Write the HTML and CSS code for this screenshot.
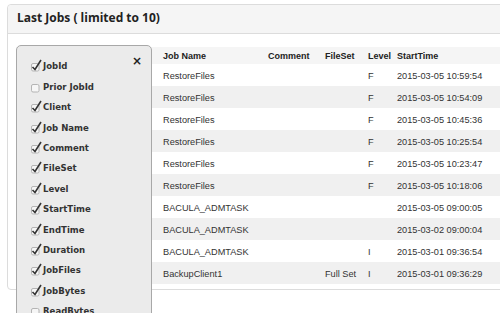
FILE: index.html
```html
<!DOCTYPE html>
<html lang="en">
<head>
<meta charset="UTF-8">
<title>Last Jobs</title>
<link rel="stylesheet" href="styles.css">
</head>
<body>

<div class="panel">
  <div class="panel-heading">Last Jobs ( limited to 10)</div>
  <div class="panel-body">

    <table class="jobs">
      <tr>
        <th class="c-id">JobId</th>
        <th class="c-client">Client</th>
        <th class="c-name">Job Name</th>
        <th class="c-comment">Comment</th>
        <th class="c-fileset">FileSet</th>
        <th class="c-level">Level</th>
        <th class="c-start">StartTime</th>
      </tr>
      <tr><td>10</td><td>backup-fd</td><td>RestoreFiles</td><td></td><td></td><td>F</td><td>2015-03-05 10:59:54</td></tr>
      <tr><td>9</td><td>backup-fd</td><td>RestoreFiles</td><td></td><td></td><td>F</td><td>2015-03-05 10:54:09</td></tr>
      <tr><td>8</td><td>backup-fd</td><td>RestoreFiles</td><td></td><td></td><td>F</td><td>2015-03-05 10:45:36</td></tr>
      <tr><td>7</td><td>backup-fd</td><td>RestoreFiles</td><td></td><td></td><td>F</td><td>2015-03-05 10:25:54</td></tr>
      <tr><td>6</td><td>backup-fd</td><td>RestoreFiles</td><td></td><td></td><td>F</td><td>2015-03-05 10:23:47</td></tr>
      <tr><td>5</td><td>backup-fd</td><td>RestoreFiles</td><td></td><td></td><td>F</td><td>2015-03-05 10:18:06</td></tr>
      <tr><td>4</td><td>backup-fd</td><td>BACULA_ADMTASK</td><td></td><td></td><td></td><td>2015-03-05 09:00:05</td></tr>
      <tr><td>3</td><td>backup-fd</td><td>BACULA_ADMTASK</td><td></td><td></td><td></td><td>2015-03-02 09:00:04</td></tr>
      <tr><td>2</td><td>backup-fd</td><td>BACULA_ADMTASK</td><td></td><td></td><td>I</td><td>2015-03-01 09:36:54</td></tr>
      <tr><td>1</td><td>client1-fd</td><td>BackupClient1</td><td></td><td>Full Set</td><td>I</td><td>2015-03-01 09:36:29</td></tr>
    </table>

    <!-- column chooser dropdown, open -->
    <div class="col-menu">
      <span class="close">&times;</span>
      <label class="item"><svg class="cb" viewBox="0 0 13 13"><rect x="1.5" y="4.5" width="7.5" height="7.5" rx="1.5"/><path d="M2.5 8 L5 10.5 L11 1"/></svg>JobId</label>
      <label class="item"><svg class="cb" viewBox="0 0 13 13"><rect x="1.5" y="4.5" width="7.5" height="7.5" rx="1.5"/></svg>Prior JobId</label>
      <label class="item"><svg class="cb" viewBox="0 0 13 13"><rect x="1.5" y="4.5" width="7.5" height="7.5" rx="1.5"/><path d="M2.5 8 L5 10.5 L11 1"/></svg>Client</label>
      <label class="item"><svg class="cb" viewBox="0 0 13 13"><rect x="1.5" y="4.5" width="7.5" height="7.5" rx="1.5"/><path d="M2.5 8 L5 10.5 L11 1"/></svg>Job Name</label>
      <label class="item"><svg class="cb" viewBox="0 0 13 13"><rect x="1.5" y="4.5" width="7.5" height="7.5" rx="1.5"/><path d="M2.5 8 L5 10.5 L11 1"/></svg>Comment</label>
      <label class="item"><svg class="cb" viewBox="0 0 13 13"><rect x="1.5" y="4.5" width="7.5" height="7.5" rx="1.5"/><path d="M2.5 8 L5 10.5 L11 1"/></svg>FileSet</label>
      <label class="item"><svg class="cb" viewBox="0 0 13 13"><rect x="1.5" y="4.5" width="7.5" height="7.5" rx="1.5"/><path d="M2.5 8 L5 10.5 L11 1"/></svg>Level</label>
      <label class="item"><svg class="cb" viewBox="0 0 13 13"><rect x="1.5" y="4.5" width="7.5" height="7.5" rx="1.5"/><path d="M2.5 8 L5 10.5 L11 1"/></svg>StartTime</label>
      <label class="item"><svg class="cb" viewBox="0 0 13 13"><rect x="1.5" y="4.5" width="7.5" height="7.5" rx="1.5"/><path d="M2.5 8 L5 10.5 L11 1"/></svg>EndTime</label>
      <label class="item"><svg class="cb" viewBox="0 0 13 13"><rect x="1.5" y="4.5" width="7.5" height="7.5" rx="1.5"/><path d="M2.5 8 L5 10.5 L11 1"/></svg>Duration</label>
      <label class="item"><svg class="cb" viewBox="0 0 13 13"><rect x="1.5" y="4.5" width="7.5" height="7.5" rx="1.5"/><path d="M2.5 8 L5 10.5 L11 1"/></svg>JobFiles</label>
      <label class="item"><svg class="cb" viewBox="0 0 13 13"><rect x="1.5" y="4.5" width="7.5" height="7.5" rx="1.5"/><path d="M2.5 8 L5 10.5 L11 1"/></svg>JobBytes</label>
      <label class="item"><svg class="cb" viewBox="0 0 13 13"><rect x="1.5" y="4.5" width="7.5" height="7.5" rx="1.5"/></svg>ReadBytes</label>
    </div>

  </div>
</div>

</body>
</html>
```

FILE: styles.css
```css
html, body {
  margin: 0;
  overflow: hidden;
}
body {
  font-family: "Liberation Sans", Arial, sans-serif;
  background-color: #fff;
  color: #333;
  width: 500px;
  height: 313px;
}
.panel {
  margin: 4px 0 0 7px;
  width: 560px;
  border: 1px solid #dcdcdc;
  border-radius: 4px;
  background-color: #fff;
}
.panel-heading {
  height: 28px;
  line-height: 26px;
  padding-left: 9px;
  font-family: "Open Sans", "DejaVu Sans", sans-serif;
  font-weight: bold;
  font-size: 12px;
  color: #222;
  background-color: #f5f5f5;
  border-bottom: 1px solid #dcdcdc;
  border-radius: 4px 4px 0 0;
}
.panel-body {
  position: relative;
  padding: 13px 8px 5px 8px;
}
table.jobs {
  border-collapse: collapse;
  table-layout: fixed;
  width: 540px;
  font-size: 9.2px;
}
.jobs th, .jobs td {
  box-sizing: border-box;
  text-align: left;
  padding: 0 0 0 8px;
  white-space: nowrap;
  overflow: hidden;
}
.jobs th {
  height: 17px;
  overflow: visible;
  font-weight: bold;
  font-size: 9px;
  color: #222;
  background-color: #f5f5f5;
}
.jobs td {
  height: 22px;
  padding-top: 1px;
}
.jobs tr:nth-child(odd) td {
  background-color: #f0f0f0;
}
.c-id { width: 54px; }
.c-client { width: 85px; }
.c-name { width: 105px; }
.c-comment { width: 57px; }
.c-fileset { width: 43px; }
.c-level { width: 29px; }

.col-menu {
  position: absolute;
  left: 8px;
  top: 11px;
  width: 121px;
  height: 300px;
  padding: 6px 0 0 13px;
  background-color: #ebebeb;
  border: 1px solid #a8a8a8;
  border-radius: 5px;
  font-family: "DejaVu Sans Condensed", "DejaVu Sans", sans-serif;
  font-weight: bold;
  font-size: 9.5px;
  color: #333;
}
.close {
  position: absolute;
  right: 9px;
  top: 8px;
  font-size: 12px;
  font-family: "DejaVu Sans", sans-serif;
  color: #222;
}
.item {
  display: flex;
  align-items: flex-end;
  height: 20.4px;
  line-height: 12px;
}
.cb {
  width: 13px;
  height: 13px;
  flex: none;
}
.cb rect {
  fill: #f6f6f6;
  stroke: #b4b4b4;
  stroke-width: 1;
}
.cb path {
  fill: none;
  stroke: #333;
  stroke-width: 1.6;
}
```
